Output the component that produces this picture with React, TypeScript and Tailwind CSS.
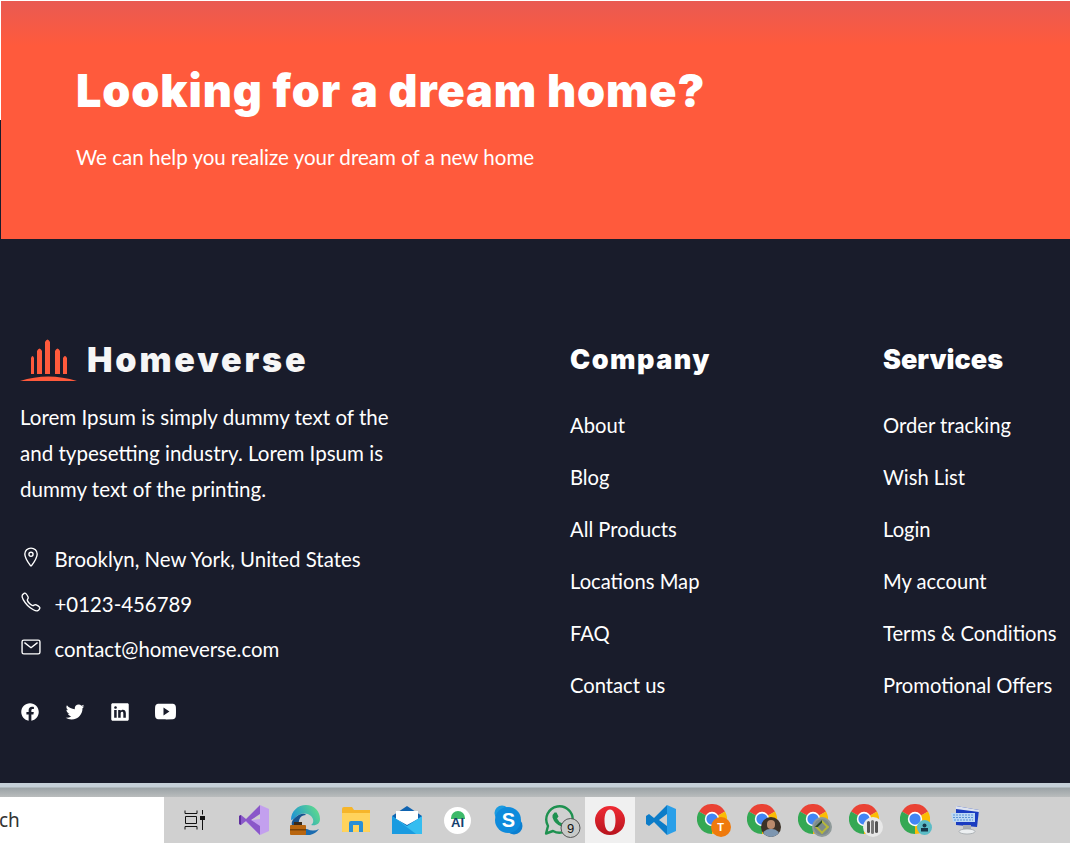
import React from "react";
import { IoLocationOutline, IoCallOutline, IoMailOutline, IoLogoFacebook, IoLogoTwitter, IoLogoLinkedin, IoLogoYoutube } from "react-icons/io5";

const body = "font-['Lato','Noto_Sans',sans-serif]";

function Logo() {
  return (
    <svg width="60" height="46" viewBox="0 0 60 46" className="shrink-0">
      <g fill="#ff5a3c">
        <path d="M2 44 Q30 35 59 44Z" />
        <path d="M13 37 V21 Q14.5 17 16 21 V37Z" />
        <path d="M19 37 V14 Q21.5 9 24 14 V37Z" />
        <path d="M27 37 V5 Q29.5 0 32 5 V37Z" />
        <path d="M37 37 V14 Q39.5 9 42 14 V37Z" />
        <path d="M45 37 V21 Q47 17 49 21 V37Z" />
      </g>
    </svg>
  );
}

function LinkCol({ title, links, className, titleClass }: { title: string; links: string[]; className: string; titleClass: string }) {
  return (
    <div className={className}>
      <h3 className={`font-['Inter',sans-serif] font-black text-[27px] leading-[40px] text-white ${titleClass}`}>{title}</h3>
      <ul className="mt-[30px] flex flex-col gap-[22px]">
        {links.map((l) => (
          <li key={l} className={`${body} text-[20.2px] leading-[30px] text-white whitespace-nowrap`}>{l}</li>
        ))}
      </ul>
    </div>
  );
}

function Cell({ children, active }: { children: React.ReactNode; active?: boolean }) {
  return <div className={`w-[50.8px] h-full shrink-0 flex items-center justify-center relative ${active ? "bg-[#f0f0f0]" : ""}`}>{children}</div>;
}

function Chrome({ badge }: { badge: React.ReactNode }) {
  return (
    <div className="relative w-[30px] h-[30px] -translate-y-[1px]">
      <svg width="30" height="30" viewBox="0 0 48 48">
        <path d="M24 24 L44.8 12 A24 24 0 0 0 3.2 12Z" fill="#ea4335" />
        <path d="M24 24 L3.2 12 A24 24 0 0 0 24 48Z" fill="#34a853" />
        <path d="M24 24 L24 48 A24 24 0 0 0 44.8 12Z" fill="#fbbc04" />
        <circle cx="24" cy="24" r="11.5" fill="#fff" />
        <circle cx="24" cy="24" r="9" fill="#4285f4" />
      </svg>
      {badge}
    </div>
  );
}

const badgeCls = "absolute -right-[4px] -bottom-[3px] w-[20px] h-[20px] rounded-full flex items-center justify-center overflow-hidden";

export default function App() {
  return (
    <div className="w-[1070px] h-[843px] overflow-hidden flex flex-col bg-[linear-gradient(to_bottom,#ffffff_120px,#191c2b_120px)]">
      <section className="ml-px mt-px h-[238px] shrink-0 bg-[linear-gradient(to_bottom,#e95a52_0px,#ff5a3c_45px)] pl-[75px] pt-[60px]">
        <h2 className="font-['Inter',sans-serif] font-black text-[45px] leading-[60px] text-white tracking-[0.87px] whitespace-nowrap">Looking for a dream home?</h2>
        <p className={`${body} mt-[21px] text-[20.55px] leading-[30px] text-white`}>We can help you realize your dream of a new home</p>
      </section>

      <footer className="h-[544px] shrink-0 bg-[#191c2b] pt-[96px] flex">
        <div className="ml-[20px] w-[550px] shrink-0">
          <div className="flex items-center gap-[9px] -ml-[2px] h-[50px]">
            <Logo />
            <span className="font-['Inter',sans-serif] font-black text-[34px] leading-[46px] text-[#f6f6f6] tracking-[2.85px] whitespace-nowrap">Homeverse</span>
          </div>
          <p className={`${body} mt-[14px] w-[395px] text-[20.55px] leading-[36px] text-white`}>
            Lorem Ipsum is simply dummy text of the and typesetting industry. Lorem Ipsum is dummy text of the printing.
          </p>
          <ul className="mt-[37px] flex flex-col gap-[15px]">
            {[
              [IoLocationOutline, "Brooklyn, New York, United States"],
              [IoCallOutline, "+0123-456789"],
              [IoMailOutline, "contact@homeverse.com"],
            ].map(([Icon, t]: any) => (
              <li key={t} className="flex items-center gap-[12.5px] h-[30px]">
                <Icon className="w-[22px] h-[22px] text-white -mt-[4px] shrink-0" />
                <span className={`${body} text-[20.4px] leading-[30px] text-white whitespace-nowrap`}>{t}</span>
              </li>
            ))}
          </ul>
          <div className="mt-[37px] flex items-center gap-[25px] text-white">
            <IoLogoFacebook className="w-[20px] h-[20px]" />
            <IoLogoTwitter className="w-[20px] h-[20px]" />
            <IoLogoLinkedin className="w-[20px] h-[20px]" />
            <IoLogoYoutube className="w-[21px] h-[21px]" />
          </div>
        </div>
        <LinkCol className="w-[313px] shrink-0 pt-[5px]" titleClass="tracking-[1.5px]" title="Company" links={["About", "Blog", "All Products", "Locations Map", "FAQ", "Contact us"]} />
        <LinkCol className="shrink-0 pt-[5px]" titleClass="tracking-[0px]" title="Services" links={["Order tracking", "Wish List", "Login", "My account", "Terms & Conditions", "Promotional Offers"]} />
      </footer>

      <div className="h-[14px] shrink-0 bg-[linear-gradient(to_bottom,#c5d0d8_0px,#c5d0d8_4px,#9ba3a6_5px,#b9bcbd_14px)]" />

      <div className="flex-1 flex bg-[#d0d0d0] min-h-0">
        <div className="w-[164px] shrink-0 bg-white flex items-center">
          <span className="font-['Noto_Sans',sans-serif] text-[19px] text-[#333] -ml-px">ch</span>
        </div>
        <div className="w-[62px] shrink-0 flex items-center justify-center">
          <svg width="22" height="20" viewBox="0 0 22 20" fill="none" stroke="#111" strokeWidth="1">
            <path d="M1 .5V3.5H13V.5M1 19.5V16.5H13V19.5M1.5 6.5H12.5V13.5H1.5ZM18.5 0V4.5M18.5 10V20" />
            <rect x="16.5" y="6.5" width="4" height="3" fill="#111" />
          </svg>
        </div>
        <div className="w-[3px] shrink-0" />
        <Cell>
          <svg width="30" height="30" viewBox="0 0 30 30">
            <path d="M21 0 L30 4 V26 L21 30 L6 16 L21 14Z" fill="#c3a0ee" />
            <path d="M21 0 L7 14 L2 10 L0 11 V19 L2 20 L7 16 L21 30 V21 L12 15 L21 9Z" fill="#8a58c9" />
            <path d="M0 11 L2 10 V20 L0 19Z" fill="#5f2f9e" />
          </svg>
        </Cell>
        <Cell>
          <svg width="30" height="30" viewBox="0 0 30 30">
            <defs>
              <linearGradient id="edgeTop" x1="0" y1="0.7" x2="1" y2="0.3">
                <stop offset="0" stopColor="#1b8fd8" />
                <stop offset="1" stopColor="#5fdc8a" />
              </linearGradient>
            </defs>
            <path d="M1 15 C1 6 8 0 16 0 C24 0 30 6 30 14 C30 19 26 21 21 20 C24 18 24 14 21 11 C17 7 9 8 6 12 C4 14 2 15 1 15Z" fill="url(#edgeTop)" />
            <path d="M6 12 C10 8 15 8 16 10 C11 10 8 14 9 20 H2 C1 17 3 14 6 12Z" fill="#17548f" />
            <path d="M12 30 H20 C24 29 27 27 29 24 C25 26 21 26 17 24 H12Z" fill="#1b6cb0" />
            <rect x="0" y="20" width="16" height="10" rx="1" fill="#b9660f" />
            <rect x="4" y="17" width="8" height="3" fill="#3c2a18" />
            <rect x="0" y="24" width="16" height="1.5" fill="#7a4208" />
          </svg>
        </Cell>
        <Cell>
          <svg width="30" height="26" viewBox="0 0 30 26">
            <path d="M1 2 Q1 0 3 0 H11 L13 3 H29 V24 Q29 25 28 25 H2 Q1 25 1 24Z" fill="#f6b52a" />
            <path d="M1 6 H29 V24 Q29 25 28 25 H2 Q1 25 1 24Z" fill="#ffd35c" />
            <path d="M8 25 V16 Q8 14 10 14 H20 Q22 14 22 16 V25 H18 V18 H12 V25Z" fill="#2a8fd6" />
          </svg>
        </Cell>
        <Cell>
          <svg width="30" height="28" viewBox="0 0 30 28">
            <path d="M0 10 L15 0 L30 10 V28 H0Z" fill="#0f63b0" />
            <path d="M4 5 H26 V13 L15 19 L4 13Z" fill="#ffffff" />
            <path d="M0 10 L15 20 L30 10 V28 H0Z" fill="#35bdf0" />
            <path d="M0 10 L24 28 H0Z" fill="#1a9be0" />
          </svg>
        </Cell>
        <Cell>
          <div className="w-[27px] h-[27px] rounded-full bg-white relative flex flex-col items-center justify-center overflow-hidden">
            <span className="absolute top-[4px] w-[14px] h-[8px] rounded-t-full bg-[#3dba6a]" />
            <span className="relative mt-[5px] font-['Liberation_Sans',sans-serif] font-bold text-[#16406e] text-[13px] leading-none">AI</span>
          </div>
        </Cell>
        <Cell>
          <svg width="30" height="30" viewBox="0 0 30 30">
            <circle cx="9" cy="8" r="7.5" fill="#1b9be0" />
            <circle cx="21" cy="21" r="8.5" fill="#0b7fd1" />
            <rect x="2" y="2" width="26" height="26" rx="13" fill="#0e8bdc" />
          </svg>
          <span className="absolute inset-0 flex items-center justify-center font-['Liberation_Sans',sans-serif] font-bold text-white text-[20px] leading-none">S</span>
        </Cell>
        <Cell>
          <div className="relative w-[30px] h-[30px] translate-x-[0.5px]">
            <svg width="30" height="30" viewBox="0 0 30 30" fill="none">
              <path d="M1.5 28.5 L3.5 21 A13.2 13.2 0 1 1 8.5 26 Z" stroke="#1e9150" strokeWidth="2.4" strokeLinejoin="round" />
              <path d="M10 7.5 L12 7.5 L14 11.5 L12.5 13.5 Q14 17 18 18.5 L20 16.5 L24 18.5 L23.5 21 Q21 23 17 21.5 Q10 19 8 12.5 Q7.5 9.5 10 7.5Z" fill="#1e9150" />
            </svg>
            <span className="absolute -right-[6px] -bottom-[3px] w-[20px] h-[20px] rounded-full bg-[#c8cac8] border border-[#555] flex items-center justify-center font-['Liberation_Sans',sans-serif] text-[#111] text-[13px] leading-none">9</span>
          </div>
        </Cell>
        <Cell active>
          <svg width="30" height="29" viewBox="0 0 30 29">
            <defs>
              <linearGradient id="opera" x1="0" y1="0" x2="0" y2="1">
                <stop offset="0" stopColor="#ef2b33" />
                <stop offset="1" stopColor="#b8141e" />
              </linearGradient>
            </defs>
            <path fillRule="evenodd" d="M15 0 A15 14.5 0 1 1 15 29 A15 14.5 0 1 1 15 0Z M15 3.5 C11 3.5 9.5 9 9.5 14.5 C9.5 20 11 25.5 15 25.5 C19 25.5 20.5 20 20.5 14.5 C20.5 9 19 3.5 15 3.5Z" fill="url(#opera)" />
          </svg>
        </Cell>
        <Cell>
          <svg width="30" height="30" viewBox="0 0 30 30">
            <path d="M21 0 L30 4 V26 L21 30 Z" fill="#2a9fe8" />
            <path d="M21 0 L8 13 L3 9 L0 11 V19 L3 21 L8 17 L21 30 V21 L13 15 L21 9 Z" fill="#0c7cc8" />
          </svg>
        </Cell>
        <Cell>
          <Chrome badge={<span className={`${badgeCls} bg-[#ef7a0d] text-white text-[11px] font-bold font-['Liberation_Sans',sans-serif]`}>T</span>} />
        </Cell>
        <Cell>
          <Chrome badge={<span className={`${badgeCls} bg-[#3c3228] items-end`}><span className="absolute top-[3px] left-[6px] w-[8px] h-[9px] rounded-full bg-[#b98a6c]" /><span className="w-[18px] h-[8px] rounded-t-full bg-[#7d96b0]" /></span>} />
        </Cell>
        <Cell>
          <Chrome badge={<span className={`${badgeCls} bg-[#7d8a8a] border-2 border-[#8f9a9a]`}><span className="w-[10px] h-[10px] rotate-45 border-2 border-[#b6b83a] border-l-[#2a4a2a]" /></span>} />
        </Cell>
        <Cell>
          <Chrome badge={<span className={`${badgeCls} bg-[#e8e8e8] gap-px`}><span className="w-[3px] h-[12px] rounded-full bg-[#555]" /><span className="w-[3px] h-[14px] rounded-full bg-[#777]" /><span className="w-[3px] h-[12px] rounded-full bg-[#555]" /></span>} />
        </Cell>
        <Cell>
          <Chrome badge={<span className={`${badgeCls} !w-[15px] !h-[15px] !right-[-2px] !bottom-[-1px] bg-[#5bbcc6]`}><svg width="9" height="9" viewBox="0 0 9 9"><circle cx="4.5" cy="2.6" r="2" fill="#16384a" /><rect x="1" y="5" width="7" height="3.5" fill="#16384a" /></svg></span>} />
        </Cell>
        <Cell>
          <svg width="30" height="30" viewBox="0 0 30 30">
            <path d="M5 1 L28 5 L26 22 L5 20Z" fill="#1a3cc0" />
            <path d="M5 1 L28 5 L28 7 L5 4Z" fill="#dde3ee" />
            <path d="M0 8 H24 V17 H2Z" fill="#bcd8f5" />
            <path d="M2 10 H22 M2 12.5 H22 M3 15 H22" stroke="#5c94d6" strokeWidth="1" strokeDasharray="2 1" />
            <path d="M12 20 H20 V24 H12Z" fill="#a8adb2" />
            <ellipse cx="16" cy="26.5" rx="8" ry="2.5" fill="#eceff1" stroke="#9aa0a5" strokeWidth=".7" />
          </svg>
        </Cell>
      </div>
    </div>
  );
}
